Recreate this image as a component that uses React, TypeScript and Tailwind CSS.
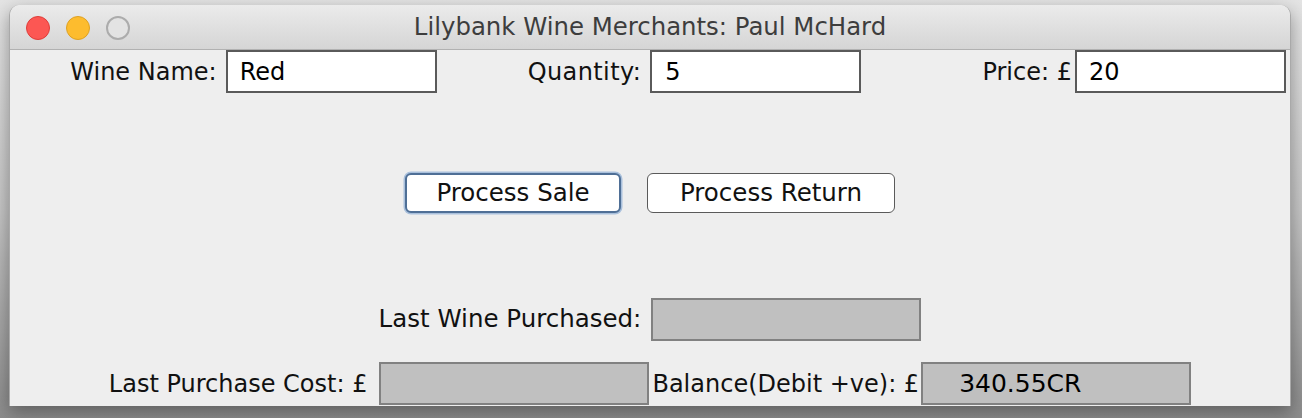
export default function App() {
  const font = { fontFamily: '"DejaVu Sans", "Liberation Sans", sans-serif' }

  return (
    <div
      className="w-[1302px] h-[418px] overflow-hidden bg-linear-to-b from-[#e4e4e4] via-[#c6c6c6] to-[#8c8c8c] pt-[5px] pl-[9px]"
      style={font}
    >
      <div className="w-[1282px] h-[401px] flex flex-col rounded-t-[10px] border-x border-[#a9a9a9] shadow-[0_6px_18px_rgba(0,0,0,0.35)] bg-[#eeeeee]">
        {/* title bar */}
        <div className="relative h-[45px] shrink-0 flex items-center justify-center rounded-t-[10px] border-b border-[#b1b1b1] bg-linear-to-b from-[#ebebeb] to-[#d5d5d5]">
          <div className="absolute left-[16px] top-[11px] flex gap-[16px]">
            <span className="w-[24px] h-[24px] rounded-full bg-[#fc5753] border border-[#df3d39]" />
            <span className="w-[24px] h-[24px] rounded-full bg-[#fdbc2e] border border-[#dea123]" />
            <span className="w-[24px] h-[24px] rounded-full bg-[#e3e3e3] border-2 border-[#acacac]" />
          </div>
          <span className="text-[24.4px] leading-none text-[#3d3d3d]">Lilybank Wine Merchants: Paul McHard</span>
        </div>

        {/* top inputs */}
        <div className="grid grid-cols-3 h-[43px] shrink-0 text-[24px] text-[#111]">
          <div className="flex items-center justify-end gap-[9px]">
            <span>Wine Name:</span>
            <div className="w-[211px] h-[43px] border-2 border-[#5a5a5a] bg-white pl-[12px] flex items-center text-black">Red</div>
          </div>
          <div className="flex items-center justify-end gap-[9px] pr-[2px]">
            <span className="tracking-[0.4px]">Quantity:</span>
            <div className="w-[211px] h-[43px] border-2 border-[#5a5a5a] bg-white pl-[13px] flex items-center text-black">5</div>
          </div>
          <div className="flex items-center justify-end gap-[3px] pr-[4px]">
            <span>Price: £</span>
            <div className="w-[211px] h-[43px] border-2 border-[#5a5a5a] bg-white pl-[12px] flex items-center text-black">20</div>
          </div>
        </div>

        {/* buttons */}
        <div className="mt-[80px] flex justify-center gap-[26px] text-[24.5px] text-[#111]">
          <button className="w-[216px] h-[40px] rounded-[6px] bg-white border-2 border-[#4f6f96] shadow-[0_0_0_1.5px_#a9c0dc] leading-none">
            Process Sale
          </button>
          <button className="w-[248px] h-[40px] rounded-[6px] bg-white border-[1.5px] border-[#5a5a5a] leading-none">
            Process Return
          </button>
        </div>

        {/* last wine */}
        <div className="mt-[85px] flex justify-center items-center gap-[10px] text-[24.5px] text-[#111]">
          <span>Last Wine Purchased:</span>
          <div className="w-[270px] h-[43px] border-2 border-[#818181] bg-[#c0c0c0]" />
        </div>

        {/* bottom row */}
        <div className="mt-[21px] flex justify-center items-center text-[24px] text-[#111]">
          <span className="mr-[12px]">Last Purchase Cost: £</span>
          <div className="w-[270px] h-[43px] border-2 border-[#818181] bg-[#c0c0c0]" />
          <span className="ml-[3px] mr-[2px]">Balance(Debit +ve): £</span>
          <div className="w-[270px] h-[43px] border-2 border-[#818181] bg-[#c0c0c0] pl-[36px] flex items-center text-[25px] text-black">
            340.55CR
          </div>
        </div>
      </div>
    </div>
  )
}
